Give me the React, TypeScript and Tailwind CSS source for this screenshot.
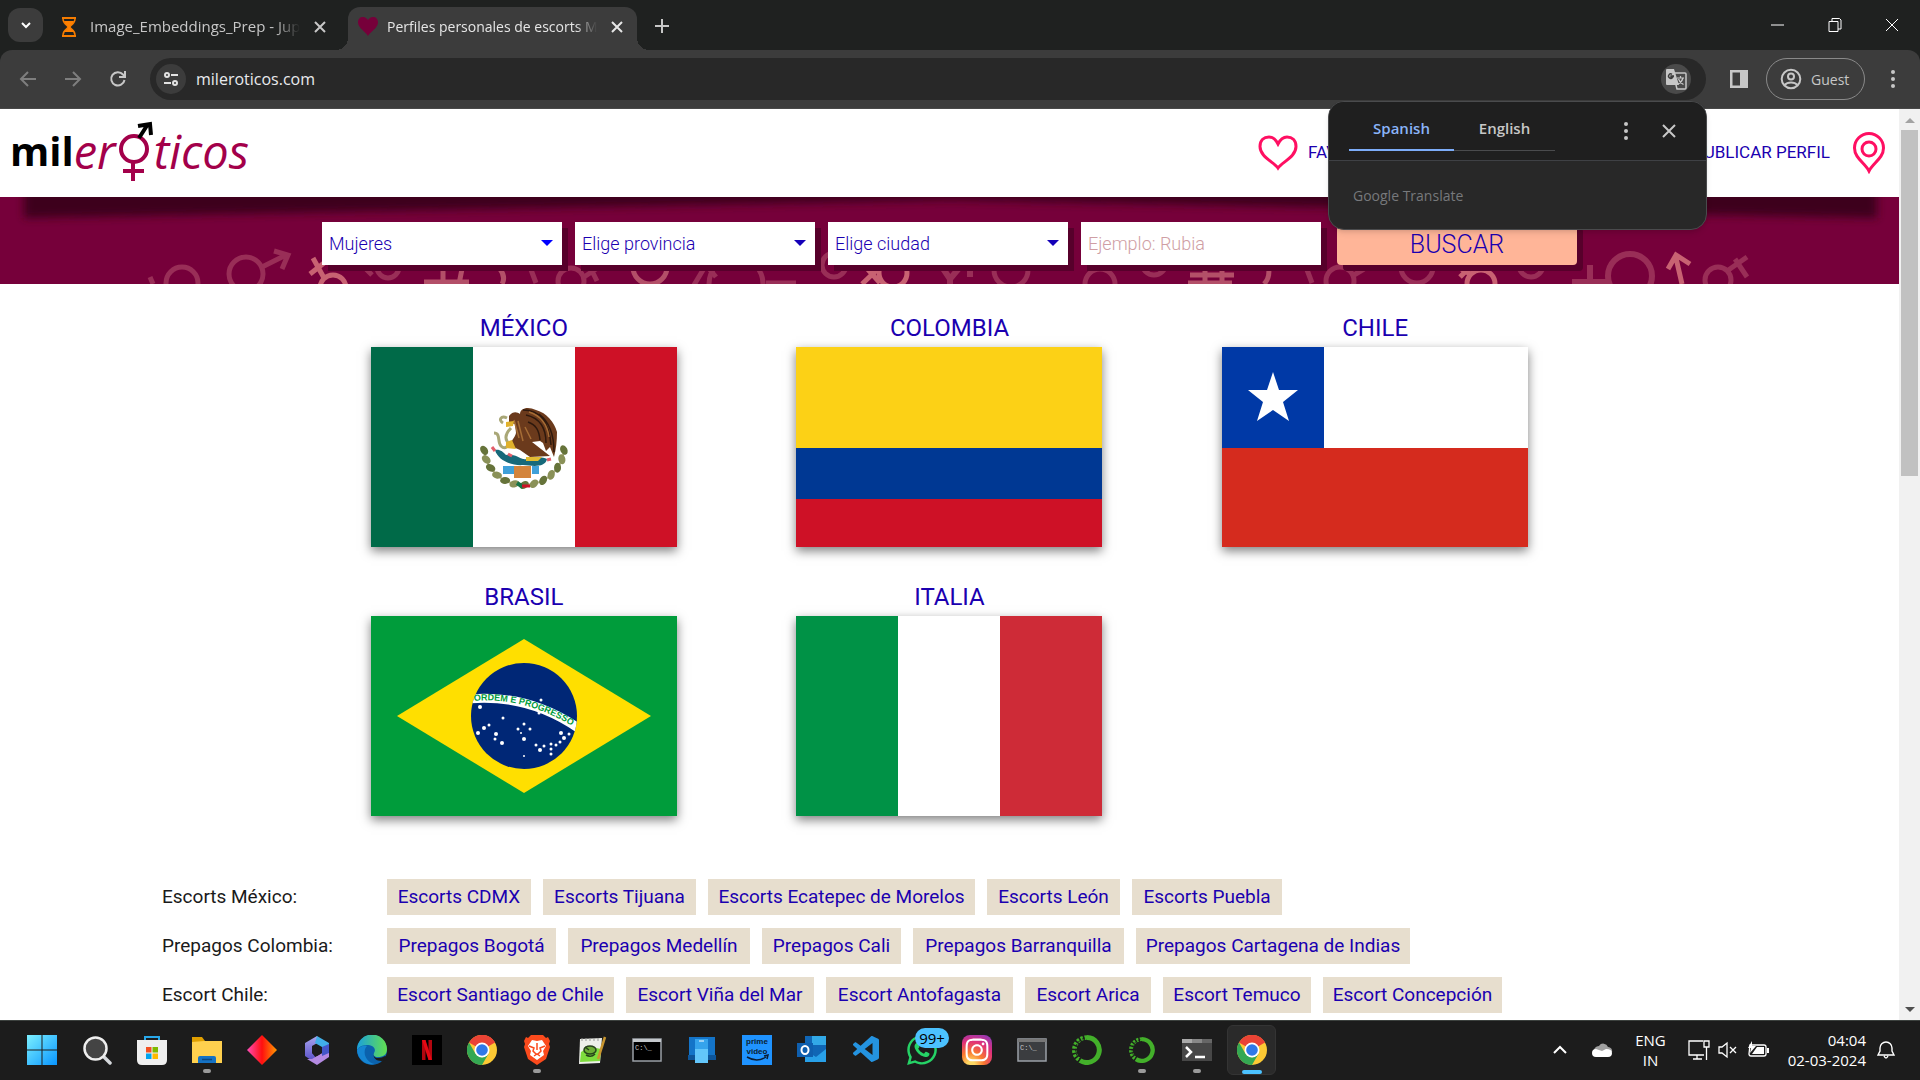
import React from "react";
import { FaWhatsapp, FaInstagram } from "react-icons/fa";
import { VscVscode } from "react-icons/vsc";

/* ---------- Browser chrome ---------- */

const Stroke = ({ d, size = 20, w = 2, className = "" }: { d: string; size?: number; w?: number; className?: string }) => (
  <svg width={size} height={size} viewBox="0 0 20 20" fill="none" stroke="currentColor" strokeWidth={w} className={className} aria-hidden="true">
    <path d={d} />
  </svg>
);

const CROSS = "M5 5l10 10M15 5L5 15";

function TabStrip() {
  return (
    <div className="flex h-[50px] shrink-0 items-end bg-[#1f2120] text-[#c7c7c7]">
      <button aria-label="Search tabs" className="mb-2 ml-2 flex h-[34px] w-[35px] items-center justify-center rounded-xl bg-[#3c3c3c] text-white">
        <Stroke d="M6 8l4 4 4-4" w={2} />
      </button>
      <div className="flex h-[43px] w-[305px] items-center pl-[17px] pb-1">
        <svg width="18" height="20" viewBox="0 0 18 20" aria-hidden="true">
          <path d="M2 1h14M2 19h14" stroke="#f57c00" strokeWidth="2" />
          <path d="M3 2c0 5 5 6 5 8s-5 3-5 8M15 2c0 5-5 6-5 8s5 3 5 8" stroke="#f57c00" strokeWidth="1.5" fill="none" />
          <path d="M4 4h10c-1 4-4 4-4 6s3 3 4 5H4c1-2 4-3 4-5S5 8 4 4z" fill="#ff8000" />
        </svg>
        <div className="ml-3 w-[210px] whitespace-nowrap text-[15px] [mask-image:linear-gradient(to_right,black_88%,transparent)]">
          Image_Embeddings_Prep - Jup
        </div>
        <button aria-label="Close tab" className="ml-[10px]"><Stroke d={CROSS} /></button>
      </div>
      <div className="relative flex h-[43px] w-[289px] items-center rounded-t-xl bg-[#3c3c3c] pl-[10px] pb-1 text-[#e6e6e6] before:absolute before:-left-3 before:bottom-0 before:size-3 before:bg-[radial-gradient(circle_at_0_0,transparent_12px,#3c3c3c_12px)] after:absolute after:-right-3 after:bottom-0 after:size-3 after:bg-[radial-gradient(circle_at_100%_0,transparent_12px,#3c3c3c_12px)]">
        <svg width="20" height="20" viewBox="0 0 20 20" aria-hidden="true">
          <path d="M10 19C8 15 0 11 0 5.500 0 2 2 0 5 0c2.500 0 4 1.500 5 3 1-1.500 2.500-3 5-3 3 0 5 2 5 5.500C20 11 12 15 10 19z" fill="#76003a" />
        </svg>
        <div className="ml-[9px] w-[210px] whitespace-nowrap text-[14px] [mask-image:linear-gradient(to_right,black_90%,transparent)]">
          Perfiles personales de escorts M
        </div>
        <button aria-label="Close tab" className="ml-[10px]"><Stroke d={CROSS} /></button>
      </div>
      <button aria-label="New tab" className="mb-[14px] ml-[15px]"><Stroke d="M10 3v14M3 10h14" /></button>
      <div className="mb-[15px] ml-auto flex gap-[37px] pr-[18px] text-white">
        <button aria-label="Minimize"><Stroke d="M3 10h13" w={1} /></button>
        <button aria-label="Restore"><Stroke d="M4 6.500h9v10H4zM7 6V3.500h7.500l1.500 1.500v9h-3" w={1} /></button>
        <button aria-label="Close"><Stroke d="M4 4l12 12M16 4L4 16" w={1} /></button>
      </div>
    </div>
  );
}

function Toolbar() {
  return (
    <div className="bg-[#1f2120]">
      <div className="flex h-[59px] items-center rounded-t-xl border-b border-[#484848] bg-[#3c3c3c] pl-[18px] pr-[17px] text-[#c7c7c7]">
        <button aria-label="Back" className="text-[#7e7e7e]"><Stroke d="M18 10H3M10 3l-7 7 7 7" /></button>
        <button aria-label="Forward" className="ml-[25px] text-[#7e7e7e]"><Stroke d="M2 10h15M10 3l7 7-7 7" /></button>
        <button aria-label="Reload" className="ml-[25px]"><Stroke d="M16.500 11A6.700 6.700 0 1 1 15 5.500L16.500 7M17 2v6h-6" /></button>
        <div className="ml-[22px] flex h-[42px] flex-1 items-center rounded-full bg-[#282828] pl-[6px] pr-[15px]">
          <button aria-label="Site information" className="flex size-[30px] items-center justify-center rounded-full bg-[#3c3c3c] text-[#e3e3e3]">
            <svg width="18" height="18" viewBox="0 0 18 18" fill="none" stroke="currentColor" strokeWidth="2" aria-hidden="true">
              <circle cx="5" cy="5" r="2" /><path d="M9 5h7M2 13h7" /><circle cx="13" cy="13" r="2" />
            </svg>
          </button>
          <input aria-label="Address" defaultValue="mileroticos.com" className="ml-[10px] h-full flex-1 bg-transparent text-[16px] text-[#e8eaed] outline-none" />
          <button aria-label="Translate this page" className="flex size-[30px] items-center justify-center rounded-full bg-[#4a4a4a]">
            <svg width="22" height="22" viewBox="0 0 22 22" aria-hidden="true">
              <path d="M8 5h12a1 1 0 0 1 1 1v14a1 1 0 0 1-1 1h-8z" fill="none" stroke="#c7c7c7" strokeWidth="1.500" />
              <path d="M2 1h7l5 16H2a1 1 0 0 1-1-1V2a1 1 0 0 1 1-1z" fill="#c7c7c7" />
              <path d="M9 8H6v1.500h1.500A2.200 2.200 0 1 1 7 6.300" fill="none" stroke="#3c3c3c" strokeWidth="1.400" />
              <path d="M12 10h7M15.500 8v2M18 10c-1 4-3 5-5 6M13.500 11c1 3 3 4.500 5 5.500" fill="none" stroke="#c7c7c7" strokeWidth="1.200" />
            </svg>
          </button>
        </div>
        <button aria-label="Side panel" className="ml-[23px]">
          <svg width="20" height="20" viewBox="0 0 20 20" aria-hidden="true"><path d="M1 1h18v18H1zM3.500 3.500v13H11v-13z" fill="currentColor" fillRule="evenodd" /></svg>
        </button>
        <button className="ml-[17px] flex h-[42px] w-[99px] items-center gap-[9px] rounded-full border border-[#8a8a8a] pl-[13px] text-[14px]">
          <svg width="22" height="22" viewBox="0 0 22 22" fill="none" stroke="currentColor" strokeWidth="2" aria-hidden="true">
            <circle cx="11" cy="11" r="9.300" /><circle cx="11" cy="8.500" r="3" /><path d="M4.500 17c3-3.500 10-3.500 13 0" />
          </svg>
          Guest
        </button>
        <button aria-label="Browser menu" className="ml-[18px]"><Dots /></button>
      </div>
    </div>
  );
}

const Dots = () => (
  <svg width="20" height="20" viewBox="0 0 20 20" fill="currentColor" aria-hidden="true">
    <circle cx="10" cy="3" r="2" /><circle cx="10" cy="10" r="2" /><circle cx="10" cy="17" r="2" />
  </svg>
);

function TranslatePopup() {
  return (
    <section aria-label="Translate" className="absolute right-[213px] top-[101px] z-20 w-[379px] overflow-hidden rounded-2xl border border-[#4a4b4d] bg-[#282828] shadow-md">
      <div className="flex h-[59px] items-center border-b border-[#3f4145] bg-[#1f1f1f] pl-5 text-[15px] font-semibold text-[#c7c7c7]">
        <button className="h-10 w-[105px] border-b-2 border-[#7cacf8] pb-1 text-[#8ab4f8]">Spanish</button>
        <button className="h-10 w-[101px] border-b border-[#4a4b4d] pb-1">English</button>
        <button aria-label="Translate options" className="ml-[61px]"><Dots /></button>
        <button aria-label="Close translate" className="ml-[23px]"><Stroke d="M4 4l12 12M16 4L4 16" /></button>
      </div>
      <div className="flex h-[68px] items-center pl-6 text-[14px] text-[#77797c]">Google Translate</div>
    </section>
  );
}

/* ---------- Site ---------- */

function Logo() {
  return (
    <a href="#" aria-label="mileroticos" className="flex items-center pb-1 text-[40px] leading-[50px]">
      <span className="font-bold text-black">mil</span>
      <span className="text-[47px] italic text-[#a3004a]">er</span>
      <svg width="38" height="60" viewBox="-2 0 38 60" fill="none" stroke="#a3004a" strokeWidth="4" aria-hidden="true">
        <circle cx="16" cy="28" r="13" />
        <path d="M15 42v18M5 50h21" />
        <path d="M21 17l9-14M20 5l12-2 1 11" stroke="#000" />
      </svg>
      <span className="text-[47px] italic text-[#a3004a]">ticos</span>
    </a>
  );
}

function SiteHeader() {
  return (
    <header className="relative z-10 flex h-[88px] shrink-0 items-center bg-white pl-[10px] pr-[13px] text-[17px] text-[#1b00b0]">
      <Logo />
      <nav className="ml-auto flex items-center font-[Roboto]">
        <a href="#" className="mr-[246px] flex w-[189px] items-center gap-[10px]">
          <svg width="40" height="36" viewBox="0 0 40 36" fill="none" stroke="#ff0f62" strokeWidth="3" className="shrink-0" aria-hidden="true">
            <path d="M20 33C16 27 2 22 2 11.500 2 5 6 2 11 2c4 0 7 3 9 7 2-4 5-7 9-7 5 0 9 3 9 9.500C38 22 24 27 20 33z" />
          </svg>
          FAVORITOS
        </a>
        <a href="#" className="flex items-center gap-[22px] whitespace-nowrap">
          PUBLICAR PERFIL
          <svg width="34" height="42" viewBox="0 0 34 42" fill="none" stroke="#ff0f62" strokeWidth="3" aria-hidden="true">
            <path d="M17 39C13 31 2.500 26 2.500 16a14.500 14.500 0 0 1 29 0C31.500 26 21 31 17 39z" /><circle cx="17" cy="17" r="7" />
          </svg>
        </a>
      </nav>
    </header>
  );
}

/* Decorative gender symbols along the band and the cast shadow of the header */
const BandArt = () => (
  <svg className="absolute inset-0 size-full" viewBox="0 0 1899 87" preserveAspectRatio="none" fill="none" aria-hidden="true">
    <defs><filter id="soft" x="-5%" y="-50%" width="110%" height="220%"><feGaussianBlur stdDeviation="4" /></filter></defs>
    <g stroke="#992e57" strokeWidth="5">
      <circle cx="182" cy="86" r="16" /><path d="M150 80l3 7" />
      <circle cx="246" cy="77" r="17" /><path d="M262 70l24-12M274 54l14 4-6 14" />
      <circle cx="388" cy="70" r="11" /><path d="M366 72l6 6M530 70l6 16" />
      <circle cx="571" cy="84" r="13" /><path d="M584 80l12-8M590 70l7 14" />
      <circle cx="736" cy="87" r="27" /><path d="M694 88l12-20 10 12M766 86h30" />
      <circle cx="834" cy="68" r="12" />
      <path d="M942 70l8 12 10-12M970 70v10M950 80v7" strokeWidth="6" /><circle cx="1011" cy="73" r="17" />
      <circle cx="1100" cy="87" r="15" /><circle cx="1154" cy="66" r="12" />
      <circle cx="1340" cy="84" r="14" /><path d="M1306 70l6 16M1354 78l10-6" />
      <circle cx="1417" cy="70" r="16" /><circle cx="1531" cy="68" r="12" />
      <circle cx="1630" cy="79" r="22" strokeWidth="6" /><path d="M1572 85h36M1590 68v19" strokeWidth="6" />
      <circle cx="1718" cy="83" r="13" /><path d="M1727 74l20-14M1735 62l12 18" />
    </g>
    <g stroke="#c86272" strokeWidth="5">
      <circle cx="333" cy="91" r="13" /><path d="M324 81l-11-20M310 77l14-11" />
      <g stroke="#b34f68"><path d="M424 85h45M443 74v13M462 72l-3 15M500 72q6 8 2 15" /><circle cx="650" cy="70" r="17" />
      <path d="M1190 78h44M1188 86h44M1205 68v19M1222 68v19M1268 68q3 12-4 19" /></g>
      <circle cx="893" cy="76" r="14" /><path d="M880 70l-18 17M864 68l16 18" />
      <circle cx="1481" cy="87" r="14" /><path d="M1472 78l-14-8M1460 80l10-10" />
      <path d="M1682 87l-6-26M1668 72l8-14 14 9" />
    </g>
    <path d="M24-8V21L950 3L1877 21V-8z" fill="#3d001c" filter="url(#soft)" />
  </svg>
);

const FIELD = "h-[43px] w-[240px] bg-white px-[7px] text-[18px] font-light text-[#1b00b0] shadow-[6px_6px_0_#57002b] outline-none";

function PickList({ label, bright = false }: { label: string; bright?: boolean }) {
  return (
    <div className="relative">
      <select aria-label={label} className={FIELD + " appearance-none"}><option>{label}</option></select>
      <svg width="12" height="6" viewBox="0 0 14 8" preserveAspectRatio="none" className="pointer-events-none absolute right-[9px] top-[18px]" aria-hidden="true">
        <path d="M0 0h14L7 8z" fill={bright ? "#0000ff" : "#1400b8"} />
      </svg>
    </div>
  );
}

function SearchBand() {
  return (
    <form className="relative flex h-[87px] shrink-0 justify-center bg-[#76003a] pt-[25px] font-[Roboto]" onSubmit={(e) => e.preventDefault()}>
      <BandArt />
      <div className="relative flex gap-[13px]">
        <PickList label="Mujeres" bright />
        <PickList label="Elige provincia" />
        <PickList label="Elige ciudad" />
        <input aria-label="Buscar por palabra" placeholder="Ejemplo: Rubia" className={FIELD + " placeholder:text-[#cf9ea4]"} />
        <button className="ml-[3px] h-[43px] w-[240px] rounded bg-[#ffb598] pt-[2px] text-[25px] font-light text-[#1b00b0] shadow-[6px_6px_0_#57002b]">BUSCAR</button>
      </div>
    </form>
  );
}

/* ---------- Flags ---------- */

const Mexico = () => {
  const leaves = Array.from({ length: 13 }, (_, i) => (175 - i * 14.2) * (Math.PI / 180));
  return (
    <>
      <path fill="#006a48" d="M0 0h102v200H0z" /><path fill="#fff" d="M102 0h102v200H102z" /><path fill="#ce1126" d="M204 0h102v200H204z" />
      <path d="M113 100a40 38 0 0 0 80 0" fill="none" stroke="#b3b184" strokeWidth="2" />
      {leaves.map((a, i) => (
        <ellipse key={i} cx={153 + 40 * Math.cos(a)} cy={100 + 38 * Math.sin(a)} rx="5" ry="3.500" fill={i % 2 ? "#8a9158" : "#66733a"}
          transform={`rotate(${(a * 180) / Math.PI + 60} ${153 + 40 * Math.cos(a)} ${100 + 38 * Math.sin(a)})`} />
      ))}
      <path d="M136 71c-6-3-9 2-4 5M123 86c7 0 3 9 7 13 4 4 9 0 6-5s0-9 4-13" fill="none" stroke="#a9a777" strokeWidth="3" />
      <path d="M138 69c4-5 8-4 11-2 0-6 8-8 16-4 11 3 18 12 21 22 0 9-1 17-3 25l-4-10-4 4-3-8-3-2-8 1 18 14-20 1-10-7-9-4c-1-5 4-8 5-13l-1-9-6-1z" fill="#6b3a1c" />
      <path d="M152 63c16 0 26 10 28 35M155 68c14 3 20 12 20 28M168 67c8 6 15 16 15 38M157 75c8 3 11 8 12 18" fill="none" stroke="#2e180d" strokeWidth="1.500" />
      <path d="M158 65c10 3 18 11 20 25M147 74l5 20M143 73l5 18M154 80l6 12" stroke="#a56c35" strokeWidth="1.500" fill="none" />
      <path d="M135 75l8-1-1 5-7 1zM135 95l6-2 4 9-10-1z" fill="#e0b12c" />
      <path d="M124 103c5-1 8 2 11 5 9-1 13 3 17 4s16-4 24 0c-2 9-14 7-24 6-10 1-25-4-28-15z" fill="#17697a" />
      <path d="M132 119h12v8h-12zM161 119h7v8h-7z" fill="#3fa0d8" /><path d="M143 119h17v12h-17z" fill="#d3843c" />
      <path d="M155 110h16l-4 4h-12z" fill="#e2bb32" />
      <path d="M121 100l3 4M137 107l4 2M176 113l4-1" stroke="#e35d6a" strokeWidth="3" />
      <path d="M146 136l6 4" stroke="#157347" strokeWidth="4" /><path d="M151 139h8" stroke="#ce1126" strokeWidth="3" />
    </>
  );
};

const STARS = [[109,91,2],[132,102,1.500],[118,109,1.500],[113,112,2],[107,117,2],[125,118,2],[124,123,1.500],[131,127,2],[147,113,1.500],[153,108,1.500],[159,113,1.500],[150,117,1],[153,123,2],[165,129,1.500],[169,134,2],[173,130,1.500],[180,128,1.500],[180,133,1.500],[180,138,1.500],[185,129,1.500],[189,126,1.500],[193,122,2],[190,117,2],[198,118,1.500],[168,97,1.500],[170,84,1.500],[153,140,1]];

const Brazil = () => (
  <>
    <path fill="#009c3b" d="M0 0h306v200H0z" /><path fill="#ffdf00" d="M26 100l127-77 127 77-127 77z" />
    <circle cx="153" cy="100" r="53" fill="#002776" />
    <clipPath id="globe"><circle cx="153" cy="100" r="53" /></clipPath>
    <path d="M96 83Q158 77 210 114" fill="none" stroke="#fff" strokeWidth="9" clipPath="url(#globe)" />
    <path id="motto" d="M103 85Q158 80 212 117" fill="none" />
    <text fontSize="9" fontWeight="bold" fill="#009c3b" fontFamily="Liberation Sans"><textPath href="#motto">ORDEM E PROGRESSO</textPath></text>
    {STARS.map(([x, y, r], i) => <circle key={i} cx={x} cy={y} r={r} fill="#fff" />)}
  </>
);

const Colombia = () => (<><path fill="#fcd116" d="M0 0h306v101H0z" /><path fill="#003893" d="M0 101h306v51H0z" /><path fill="#ce1126" d="M0 152h306v48H0z" /></>);
const Chile = () => (<><path fill="#fff" d="M0 0h306v101H0z" /><path fill="#0039a6" d="M0 0h102v101H0z" /><path fill="#d52b1e" d="M0 101h306v99H0z" /><path fill="#fff" d="M51 25l6 18h19L61 55l6 19-16-11-16 11 6-19-15-12h19z" /></>);
const Italy = () => (<><path fill="#009246" d="M0 0h102v200H0z" /><path fill="#fff" d="M102 0h102v200H102z" /><path fill="#ce2b37" d="M204 0h102v200H204z" /></>);

const COUNTRIES = [
  { name: "MÉXICO", Flag: Mexico }, { name: "COLOMBIA", Flag: Colombia }, { name: "CHILE", Flag: Chile },
  { name: "BRASIL", Flag: Brazil }, { name: "ITALIA", Flag: Italy },
];

function Countries() {
  return (
    <div className="mx-auto grid w-full max-w-[1277px] grid-cols-3 gap-y-[34px] pt-[28px] font-[Roboto]">
      {COUNTRIES.map(({ name, Flag }) => (
        <a key={name} href="#" className="flex flex-col items-center gap-[3px] text-[24px] leading-8 text-[#1b00b0]">
          {name}
          <svg width="306" height="200" viewBox="0 0 306 200" className="shadow-[0_4px_10px_rgba(0,0,0,0.5)]" aria-hidden="true"><Flag /></svg>
        </a>
      ))}
    </div>
  );
}

const LINKS: { label: string; items: [string, string][] }[] = [
  { label: "Escorts México:", items: [["Escorts CDMX", "w-[144px]"], ["Escorts Tijuana", "w-[153px]"], ["Escorts Ecatepec de Morelos", "w-[267px]"], ["Escorts León", "w-[133px]"], ["Escorts Puebla", "w-[150px]"]] },
  { label: "Prepagos Colombia:", items: [["Prepagos Bogotá", "w-[169px]"], ["Prepagos Medellín", "w-[182px]"], ["Prepagos Cali", "w-[139px]"], ["Prepagos Barranquilla", "w-[211px]"], ["Prepagos Cartagena de Indias", "w-[274px]"]] },
  { label: "Escort Chile:", items: [["Escort Santiago de Chile", "w-[227px]"], ["Escort Viña del Mar", "w-[188px]"], ["Escort Antofagasta", "w-[187px]"], ["Escort Arica", "w-[126px]"], ["Escort Temuco", "w-[148px]"], ["Escort Concepción", "w-[179px]"]] },
];

function CityLinks() {
  return (
    <div className="mt-[63px] flex flex-col gap-[13px] pl-[162px] font-[Roboto] text-[19px]">
      {LINKS.map((row) => (
        <div key={row.label} className="flex h-9 items-center whitespace-nowrap">
          <span className="w-[225px] text-[#1a1a1a]">{row.label}</span>
          <div className="flex gap-3">
            {row.items.map(([text, width]) => (
              <a key={text} href="#" className={"bg-[#e7dece] text-center leading-9 text-[#1b00b0] " + width}>{text}</a>
            ))}
          </div>
        </div>
      ))}
    </div>
  );
}

/* ---------- Taskbar ---------- */

const Svg = ({ children }: { children: React.ReactNode }) => (
  <svg width="30" height="30" viewBox="0 0 30 30" aria-hidden="true">{children}</svg>
);

const ChromeIcon = () => (
  <Svg>
    <circle cx="15" cy="15" r="15" fill="#fcc934" />
    <path d="M15 15L2 7.500A15 15 0 0 1 28 7.500z" fill="#ea4335" />
    <path d="M15 0a15 15 0 0 1 13 7.500H15z" fill="#ea4335" />
    <path d="M2 7.500A15 15 0 0 0 15 30l6.500-11.200L15 22.500l-6.500-3.700z" fill="#34a853" />
    <circle cx="15" cy="15" r="7.500" fill="#fff" /><circle cx="15" cy="15" r="5.800" fill="#3078e8" />
  </Svg>
);
const Ring = ({ s }: { s: number }) => (
  <svg width={s} height={s} viewBox="0 0 30 30" fill="none" aria-hidden="true">
    <path d="M15 2.500a12.500 12.500 0 1 1-7 23" stroke="#43b02a" strokeWidth="5" />
    <path d="M15 2.500A12.500 12.500 0 0 0 8 25.500" stroke="#43b02a" strokeWidth="4.500" strokeDasharray="2.500 1.500" />
    <path d="M13 3A12 12 0 0 0 8 24" stroke="#1c1c1c" strokeWidth="1" strokeDasharray="3 2" />
  </svg>
);
const ConsoleIcon = ({ gray = false }: { gray?: boolean }) => (
  <Svg>
    <path d="M1 4h28v22H1z" fill={gray ? "#3b3d40" : "#000"} stroke="#9ba0a6" strokeWidth="1.500" /><path d="M1 4h28v3H1z" fill={gray ? "#777" : "#c4c8cc"} />
    <text x="3" y="15" fontSize="7" fill="#c8c8c8" fontFamily="Liberation Mono">C:\_</text>
  </Svg>
);

const APPS: { name: string; icon: React.ReactNode; running?: boolean; active?: boolean; badge?: string }[] = [
  { name: "Start", icon: <Svg><defs><linearGradient id="win" x1="0" y1="0" x2="1" y2="1"><stop stopColor="#7cf0ff" /><stop offset="1" stopColor="#0895ff" /></linearGradient></defs><path d="M0 0h14.500v14.500H0zM15.500 0H30v14.500H15.500zM0 15.500h14.500V30H0zM15.500 15.500H30V30H15.500z" fill="url(#win)" /></Svg> },
  { name: "Search", icon: <Svg><path d="M22 22l6 6" stroke="#d5d8dc" strokeWidth="3.500" strokeLinecap="round" /><circle cx="13.500" cy="13.500" r="11" fill="#444" stroke="#eee" strokeWidth="2.500" /></Svg> },
  { name: "Store", icon: <Svg><path d="M8 7V2h14v5" fill="none" stroke="#28a8ea" strokeWidth="2" /><path d="M0 5h30v20q0 5-5 5H5q-5 0-5-5z" fill="#efefef" /><path d="M9 12h5.500v5.500H9z" fill="#f25022" /><path d="M15.500 12H21v5.500h-5.500z" fill="#7fba00" /><path d="M9 18.500h5.500V24H9z" fill="#00a4ef" /><path d="M15.500 18.500H21V24h-5.500z" fill="#ffb900" /></Svg> },
  { name: "File Explorer", running: true, icon: <Svg><path d="M0 2h10l3 4v6H0z" fill="#e09f00" /><path d="M0 7l12-1h18v22H0z" fill="#ffd04e" /><path d="M6 28v-5q0-2 2-2h14q2 0 2 2v5z" fill="#1572c4" /><path d="M10 24.500h10" stroke="#0c4780" strokeWidth="1.500" /></Svg> },
  { name: "Diamond", icon: <Svg><defs><linearGradient id="dia"><stop stopColor="#ff4db8" /><stop offset=".5" stopColor="#ff0f0f" /><stop offset="1" stopColor="#ff9a00" /></linearGradient></defs><path d="M15 0l15 15-15 15L0 15z" fill="url(#dia)" /></Svg> },
  { name: "Microsoft 365", icon: <Svg><defs><linearGradient id="m365" x1="0" y1="0" x2="0" y2="1"><stop stopColor="#a9a5ee" /><stop offset="1" stopColor="#5b52c9" /></linearGradient></defs><path d="M15 1L3 8v13l6 4 5-2-4-5v-7l7-4z" fill="url(#m365)" /><path d="M15 1l12 7v13l-7-3v-6l-7-4z" fill="#41afe8" /><path d="M27 12v10l-12 8-10-6 5 0 10-6V12z" fill="#b48ae2" /><path d="M20 12l7-3v9l-7 3z" fill="#4456c8" /><path d="M15 10l5 3v5l-5 3-5-3v-5z" fill="#1c1c1c" /></Svg> },
  { name: "Edge", icon: <Svg><defs><linearGradient id="edge"><stop stopColor="#1ba0dc" /><stop offset="1" stopColor="#62e04f" /></linearGradient></defs><circle cx="15" cy="15" r="15" fill="#0b62ad" /><path d="M0 15a15 15 0 0 1 30-1c0 6-4 8-9 8-4 0-5-2-4-4 3-5-2-8-7-8-6 0-9 3-10 5z" fill="url(#edge)" /><path d="M10 11c-5 5-2 16 8 18A15 15 0 0 1 0 15c2-3 6-5 10-4z" fill="#1585d2" /><path d="M17 18c-1 3 1 5 4 5 3 0 5-1 7-2l2 1-1 3c-5 2-14 1-12-7z" fill="#1c1c1c" /></Svg> },
  { name: "Netflix", icon: <Svg><path d="M0 0h30v30H0z" fill="#000" /><path d="M10 5h3.500v20H10zM16.500 5H20v20h-3.500z" fill="#b1060f" /><path d="M10 5h3.500L20 25h-3.500z" fill="#e50914" /></Svg> },
  { name: "Chrome", icon: <ChromeIcon /> },
  { name: "Brave", running: true, icon: <Svg><path d="M9 0h12l3 3 2-1 2 4-1 3 1 3-4 12-9 6-9-6L2 12l1-3-1-3 2-4 2 1z" fill="#fb4a1c" /><path d="M10 5l5 1 5-1 4 6-3 5 1 4-7 5-7-5 1-4-3-5z" fill="#fff" /><path d="M7 11l5 2-1 3 3 3M23 11l-5 2 1 3-3 3M12 21l3-2 3 2M15 8v7" fill="none" stroke="#fb4a1c" strokeWidth="1.500" /></Svg> },
  { name: "Notepad++", icon: <Svg><path d="M3 4l22-1-2 25-21 1z" fill="#eef0ea" /><path d="M4 17q9-6 20-3l-1 12-20 1z" fill="#7edc3d" /><ellipse cx="13" cy="15" rx="6" ry="4" fill="#6dae35" stroke="#27421b" strokeWidth="1.500" /><path d="M9 20q5 3 9-1M8 12l4 3" stroke="#27421b" strokeWidth="1.500" fill="none" /><path d="M5 3v3M9 3v3M13 3v3M17 3v3M21 3v3" stroke="#999" strokeWidth="1" /><path d="M28 2l-7 22" stroke="#c9962f" strokeWidth="2.500" /></Svg> },
  { name: "Command Prompt", icon: <ConsoleIcon /> },
  { name: "Phone Link", icon: <Svg><path d="M2 2h26v18H2z" fill="#1474c8" /><path d="M1 20h28v5H1z" fill="#0d559a" /><path d="M8 4h13v24H8z" fill="#35a3ec" /><path d="M8 14h13v14H8z" fill="#63c6fa" /><path d="M12 6h5" stroke="#fff" /></Svg> },
  { name: "Prime Video", icon: <Svg><path d="M0 0h30v30H0z" fill="#1f93ff" /><text x="15" y="9" fontSize="8" fontWeight="bold" textAnchor="middle" fill="#0b1d33" fontFamily="Liberation Sans">prime</text><text x="15" y="19" fontSize="8" fontWeight="bold" textAnchor="middle" fill="#0b1d33" fontFamily="Liberation Sans">video</text><path d="M5 22q10 6 19 0M22 21l4-1-1 4" fill="none" stroke="#0b1d33" strokeWidth="1.500" /></Svg> },
  { name: "Outlook", icon: <Svg><path d="M8 1h21v26H8z" fill="#1066b5" /><path d="M15 1h14v9H15z" fill="#32a9e7" /><path d="M8 15l11 7 10-8v13H8z" fill="#28a0e8" /><path d="M0 8h16v14H0z" fill="#0f5fae" /><ellipse cx="8" cy="15" rx="3.500" ry="4" fill="none" stroke="#fff" strokeWidth="2" /></Svg> },
  { name: "Visual Studio Code", icon: <VscVscode size={32} className="text-[#2493e0]" /> },
  { name: "WhatsApp", badge: "99+", icon: <FaWhatsapp size={34} className="text-[#25d366]" /> },
  { name: "Instagram", icon: <span className="flex size-[30px] items-center justify-center rounded-lg bg-[radial-gradient(circle_at_30%_100%,#fed964_10%,#f9792f_35%,#e0307a_65%,#7c3cc8)]"><FaInstagram size={26} className="text-white" /></span> },
  { name: "Terminal", icon: <ConsoleIcon gray /> },
  { name: "Anaconda", icon: <Ring s={30} /> },
  { name: "Anaconda Navigator", running: true, icon: <Ring s={26} /> },
  { name: "Windows Terminal", running: true, icon: <Svg><path d="M0 4h30v22H0z" fill="#474747" /><path d="M0 4h10v4H0z" fill="#aaa" /><path d="M10 4h10v4H10z" fill="#888" /><path d="M20 4h10v4H20z" fill="#666" /><path d="M4 12l5 5-5 5M13 22h10" fill="none" stroke="#fff" strokeWidth="2.500" /></Svg> },
  { name: "Chrome window", active: true, icon: <ChromeIcon /> },
];

function Taskbar() {
  return (
    <footer className="z-10 flex h-[60px] shrink-0 items-center border-t border-[#3c413e] bg-[#1c1c1c] pb-px pl-[14px] pr-[25px] text-white">
      {APPS.map((a) => (
        <div key={a.name} className="flex w-[55px] shrink-0 justify-center">
          <button aria-label={a.name} className={"relative flex h-[50px] w-[49px] items-center justify-center rounded-md " + (a.active ? "border border-[#343434] bg-[#2a2a2a]" : "")}>
            {a.icon}
            {a.running && <span className="absolute bottom-[2px] h-1 w-2 rounded-full bg-[#9a9a9a]" />}
            {a.active && <span className="absolute bottom-0 h-1 w-5 rounded-full bg-[#4cc2ff]" />}
            {a.badge && <span className="absolute top-[3px] left-[18px] flex h-5 w-[34px] items-center justify-center rounded-full bg-[#4cc2ff] text-[15px] text-black">{a.badge}</span>}
          </button>
        </div>
      ))}
      <div className="ml-auto flex items-center text-[15px] leading-5">
        <button aria-label="Hidden icons"><Stroke d="M4 13l6-6 6 6" /></button>
        <svg width="22" height="16" viewBox="0 0 22 16" className="ml-[21px]" aria-hidden="true"><path d="M3 10a5 5 0 0 1 5-6 5 5 0 0 1 9 1 4 4 0 0 1 4 5l-8-1z" fill="#a0a0a0" /><path d="M1 11q0-4 4-4l6 2 4-2q6 0 6 4 0 4-4 4H5q-4 0-4-4z" fill="#fff" /></svg>
        <div className="ml-[22px] text-center">ENG<br />IN</div>
        <svg width="22" height="22" viewBox="0 0 22 22" fill="none" stroke="currentColor" strokeWidth="1.300" className="ml-[22px]" aria-hidden="true"><path d="M15 2H1v14h15M5 20h9M9 16v4M16 2h5v6h-5zM18.500 8v13" /></svg>
        <svg width="20" height="20" viewBox="0 0 20 20" fill="none" stroke="currentColor" strokeWidth="1.300" className="ml-[8px]" aria-hidden="true"><path d="M1 7h3l5-4v14l-5-4H1zM12 7l6 6M18 7l-6 6" /></svg>
        <svg width="22" height="20" viewBox="0 0 22 20" className="ml-[9px]" aria-hidden="true"><path d="M3 5h14q2 0 2 2v7q0 2-2 2H4q-2 0-2-2z" fill="none" stroke="#fff" strokeWidth="1.300" /><path d="M10 7h7v7H5zM20 8h2v5h-2z" fill="#fff" /><path d="M5 1L1 8h3l-1 5 6-7H5z" fill="#fff" /></svg>
        <time className="ml-[19px] text-right">04:04<br />02-03-2024</time>
        <svg width="18" height="20" viewBox="0 0 18 20" fill="none" stroke="currentColor" strokeWidth="1.400" className="ml-[11px]" aria-hidden="true"><path d="M1 15l2-4V8a6 6 0 0 1 12 0v3l2 4zM7 16q2 4 4 0" /></svg>
      </div>
    </footer>
  );
}

export default function App() {
  return (
    <div className="relative flex h-screen flex-col overflow-hidden bg-white font-['Open_Sans','Noto_Sans',sans-serif]">
      <TabStrip />
      <Toolbar />
      <TranslatePopup />
      <div className="flex min-h-0 flex-1">
        <main className="min-w-0 flex-1 overflow-hidden">
          <SiteHeader />
          <SearchBand />
          <Countries />
          <CityLinks />
        </main>
        <div aria-hidden="true" className="flex w-[21px] flex-col items-center bg-[#f1f1f1]">
          <svg width="10" height="21" viewBox="0 0 10 21"><path d="M0 14h10L5 9z" fill="#a3a3a3" /></svg>
          <div className="h-[346px] w-[17px] bg-[#c1c1c1]" />
          <svg width="10" height="21" viewBox="0 0 10 21" className="mt-auto"><path d="M0 8h10l-5 5z" fill="#505050" /></svg>
        </div>
      </div>
      <Taskbar />
    </div>
  );
}
